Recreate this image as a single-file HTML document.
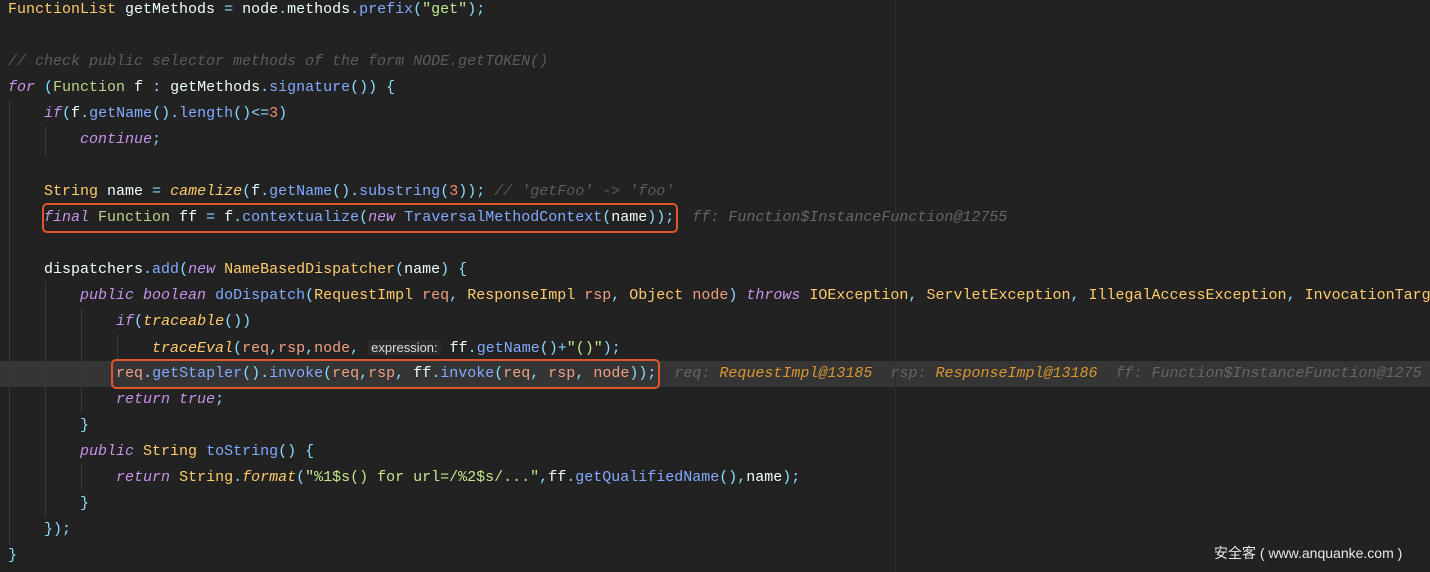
<!DOCTYPE html><html><head><meta charset="utf-8"><style>
body{margin:0;width:1430px;height:572px;background:#222222;overflow:hidden;position:relative;font-family:"Liberation Mono",monospace;font-size:15px;color:#eeffff}
.l{position:absolute;left:8px;height:26px;line-height:26px;white-space:pre}
.t{color:#ffcb6b}.p{color:#89ddff}.m{color:#82aaff}.k{color:#c792ea;font-style:italic}.s{color:#c3e88d}.n{color:#f78c6c}
.c{color:#5c5c5c;font-style:italic}.v{color:#f0a080}.g{color:#b9d78a}.si{color:#ffcb6b;font-style:italic}
.h{color:#666;font-style:italic}.ho{color:#d9962f;font-style:italic}
.hl{position:absolute;left:0;top:361px;width:1430px;height:26px;background:#353535}
.box{position:absolute;border:2px solid #e0552b;border-radius:5px}
.guide{position:absolute;width:1px;background:#3a3a3a}
.tag{font-family:"Liberation Sans",sans-serif;font-size:13px;color:#ddd;background:#2b2b2b;padding:0 3px}
</style></head><body>
<div class="hl"></div>
<div class="guide" style="left:895px;top:0;height:572px;background:#2e2e2e"></div>
<div class="guide" style="left:9px;top:100px;height:445px"></div>
<div class="guide" style="left:45px;top:126px;height:30px"></div>
<div class="guide" style="left:45px;top:282px;height:235px"></div>
<div class="guide" style="left:81px;top:308px;height:105px"></div>
<div class="guide" style="left:81px;top:464px;height:26px"></div>
<div class="guide" style="left:117px;top:334px;height:26px"></div>
<div class="l" style="top:-3px"><span class="t">FunctionList</span> getMethods <span class="p">=</span> node<span class="p">.</span>methods<span class="p">.</span><span class="m">prefix</span><span class="p">(</span><span class="s">"get"</span><span class="p">);</span></div>
<div class="l c" style="top:49px">// check public selector methods of the form NODE.getTOKEN()</div>
<div class="l" style="top:75px"><span class="k">for</span> <span class="p">(</span><span class="g">Function</span> f <span class="p">:</span> getMethods<span class="p">.</span><span class="m">signature</span><span class="p">()) {</span></div>
<div class="l" style="top:101px">    <span class="k">if</span><span class="p">(</span>f<span class="p">.</span><span class="m">getName</span><span class="p">().</span><span class="m">length</span><span class="p">()&lt;=</span><span class="n">3</span><span class="p">)</span></div>
<div class="l" style="top:127px">        <span class="k">continue</span><span class="p">;</span></div>
<div class="l" style="top:179px">    <span class="t">String</span> name <span class="p">=</span> <span class="si">camelize</span><span class="p">(</span>f<span class="p">.</span><span class="m">getName</span><span class="p">().</span><span class="m">substring</span><span class="p">(</span><span class="n">3</span><span class="p">));</span> <span class="c">// 'getFoo' -&gt; 'foo'</span></div>
<div class="l" style="top:205px">    <span class="k">final</span> <span class="g">Function</span> ff <span class="p">=</span> f<span class="p">.</span><span class="m">contextualize</span><span class="p">(</span><span class="k">new</span> <span class="m">TraversalMethodContext</span><span class="p">(</span>name<span class="p">));</span>  <span class="h">ff: Function$InstanceFunction@12755</span></div>
<div class="l" style="top:257px">    dispatchers<span class="p">.</span><span class="m">add</span><span class="p">(</span><span class="k">new</span> <span class="t">NameBasedDispatcher</span><span class="p">(</span>name<span class="p">) {</span></div>
<div class="l" style="top:283px">        <span class="k">public boolean</span> <span class="m">doDispatch</span><span class="p">(</span><span class="t">RequestImpl</span> <span class="v">req</span><span class="p">,</span> <span class="t">ResponseImpl</span> <span class="v">rsp</span><span class="p">,</span> <span class="t">Object</span> <span class="v">node</span><span class="p">)</span> <span class="k">throws</span> <span class="t">IOException</span><span class="p">,</span> <span class="t">ServletException</span><span class="p">,</span> <span class="t">IllegalAccessException</span><span class="p">,</span> <span class="t">InvocationTarg</span></div>
<div class="l" style="top:309px">            <span class="k">if</span><span class="p">(</span><span class="si">traceable</span><span class="p">())</span></div>
<div class="l" style="top:335px">                <span class="si">traceEval</span><span class="p">(</span><span class="v">req</span><span class="p">,</span><span class="v">rsp</span><span class="p">,</span><span class="v">node</span><span class="p">,</span> <span class="tag">expression:</span> ff<span class="p">.</span><span class="m">getName</span><span class="p">()+</span><span class="s">"()"</span><span class="p">);</span></div>
<div class="l" style="top:361px">            <span class="v">req</span><span class="p">.</span><span class="m">getStapler</span><span class="p">().</span><span class="m">invoke</span><span class="p">(</span><span class="v">req</span><span class="p">,</span><span class="v">rsp</span><span class="p">,</span> ff<span class="p">.</span><span class="m">invoke</span><span class="p">(</span><span class="v">req</span><span class="p">,</span> <span class="v">rsp</span><span class="p">,</span> <span class="v">node</span><span class="p">));</span>  <span class="h">req: </span><span class="ho">RequestImpl@13185</span>  <span class="h">rsp: </span><span class="ho">ResponseImpl@13186</span>  <span class="h">ff: Function$InstanceFunction@1275</span></div>
<div class="l" style="top:387px">            <span class="k">return true</span><span class="p">;</span></div>
<div class="l" style="top:413px">        <span class="p">}</span></div>
<div class="l" style="top:439px">        <span class="k">public</span> <span class="t">String</span> <span class="m">toString</span><span class="p">() {</span></div>
<div class="l" style="top:465px">            <span class="k">return</span> <span class="t">String</span><span class="p">.</span><span class="si">format</span><span class="p">(</span><span class="s">"%1$s() for url=/%2$s/..."</span><span class="p">,</span>ff<span class="p">.</span><span class="m">getQualifiedName</span><span class="p">(),</span>name<span class="p">);</span></div>
<div class="l" style="top:491px">        <span class="p">}</span></div>
<div class="l" style="top:517px">    <span class="p">});</span></div>
<div class="l" style="top:543px"><span class="p">}</span></div>
<div class="box" style="left:42px;top:203px;width:632px;height:26px"></div>
<div class="box" style="left:111px;top:359px;width:545px;height:26px"></div>
<div style="position:absolute;left:1214px;top:543px;font-family:'Liberation Sans','Noto Sans CJK SC',sans-serif;font-size:14px;color:#e8e8e8;white-space:pre">安全客 ( www.anquanke.com )</div>
</body></html>
